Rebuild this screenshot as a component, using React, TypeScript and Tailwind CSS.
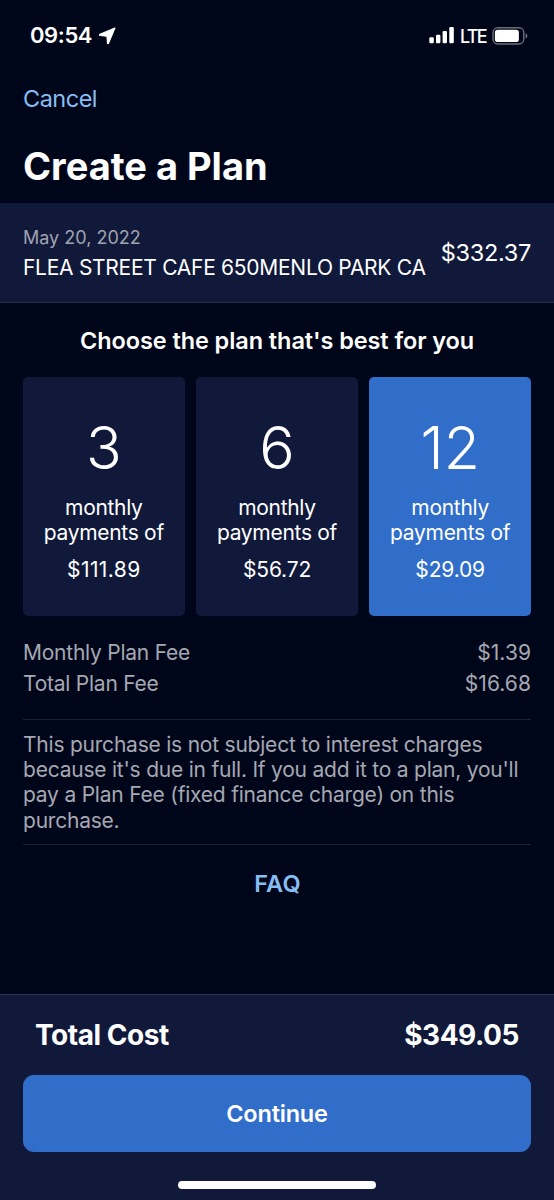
import { useState } from "react";

const plans = [
  { months: 3, amount: "$111.89" },
  { months: 6, amount: "$56.72" },
  { months: 12, amount: "$29.09" },
];

const StatusBar = () => (
  <div className="flex items-center justify-between h-[71px] pl-[30px] pr-[26px]">
    <div className="flex items-center gap-[6px]">
      <span className="w-[63px] text-[22px] font-semibold tracking-[-0.4px]">09:54</span>
      <svg
        className="w-[17px] h-[18px]"
        viewBox="0 0 17 18"
        fill="white"
        stroke="white"
        strokeWidth="1.2"
        strokeLinejoin="round"
      >
        <path d="M15.9 1 .9 7.4c-.5.3-.4 1 .2 1.1l6.6.7c.2 0 .3.1.3.3l.5 6.6c.1.6.7.7 1 .2Z" />
      </svg>
    </div>

    <div className="flex items-center">
      <svg className="w-[25px] h-[17px]" viewBox="0 0 25 17" fill="white">
        <rect x=".3" y="10.3" width="4.5" height="6" rx="1.2" />
        <rect x="7" y="7.7" width="4.4" height="8.6" rx="1.2" />
        <rect x="13.6" y="4" width="4.4" height="12.3" rx="1.2" />
        <rect x="20.3" y="0" width="4.5" height="16.3" rx="1.2" />
      </svg>
      <span className="ml-[6px] w-[27px] pt-px text-[18px] font-medium tracking-[-1.8px]">
        LTE
      </span>
      <svg className="ml-[5px] w-[36px] h-[18px]" viewBox="0 0 36 18" fill="none">
        <rect x="1" y=".8" width="30.8" height="16.2" rx="4.8" stroke="#6c6e7b" strokeWidth="1.4" />
        <rect x="2.9" y="2.8" width="24" height="12.2" rx="2.8" fill="white" />
        <path d="M33.6 6.3c2.4.9 2.4 4.3 0 5.2Z" fill="#6c6e7b" />
      </svg>
    </div>
  </div>
);

const FeeRow = ({ label, value }: { label: string; value: string }) => (
  <div className="flex justify-between">
    <span className="tracking-[-0.24px]">{label}</span>
    <span className="tracking-[0.05px]">{value}</span>
  </div>
);

const App = () => {
  const [selected, setSelected] = useState(12);

  return (
    <div className="flex flex-col w-full h-[1200px] bg-[#00061a] text-white font-['Inter',sans-serif] overflow-hidden">
      <StatusBar />

      {/* Header */}
      <header className="flex flex-col items-start h-[132px] px-[23px]">
        <button className="mt-3 h-8 text-[23.5px] leading-8 tracking-[-0.5px] text-[#86bdf4]">
          Cancel
        </button>
        <h1 className="mt-[27px] text-[38px] leading-[48px] font-bold whitespace-nowrap">
          Create a Plan
        </h1>
      </header>

      {/* Transaction */}
      <section className="flex items-center justify-between h-[100px] px-[23px] bg-[#11193a] border-b border-[#252d4b]">
        <div className="pt-[2px] whitespace-nowrap">
          <p className="text-[18px] leading-[26px] text-[#a0a3b1]">May 20, 2022</p>
          <p className="mt-[2px] text-[21px] leading-[30px] tracking-[-0.28px]">
            FLEA STREET CAFE 650MENLO PARK CA
          </p>
        </div>
        <span className="pt-px text-[23.5px] tracking-[-0.3px]">$332.37</span>
      </section>

      <main className="flex-1 px-[23px]">
        <h2 className="mt-[21px] text-center text-[23.5px] leading-[34px] font-semibold tracking-[-0.08px] whitespace-nowrap">
          Choose the plan that's best for you
        </h2>

        {/* Plans */}
        <div className="grid grid-cols-3 gap-[11.5px] mt-[19px]">
          {plans.map((plan) => (
            <button
              key={plan.months}
              onClick={() => setSelected(plan.months)}
              className={`flex flex-col items-center h-[239px] rounded-[5px] ${
                selected === plan.months ? "bg-[#306ec9]" : "bg-[#11193a]"
              }`}
            >
              <span className="mt-[35px] text-[59px] leading-[72px] font-light">
                {plan.months}
              </span>
              <span className="mt-[11px] text-[21px] leading-[25px] tracking-[-0.3px]">
                monthly
                <br />
                payments of
              </span>
              <span
                className={`mt-3 text-[21px] leading-[25px] ${
                  plan.months === 3 ? "tracking-[0.4px]" : "tracking-[-0.15px]"
                }`}
              >
                {plan.amount}
              </span>
            </button>
          ))}
        </div>

        {/* Fees */}
        <div className="mt-[21px] h-[83px] text-[21px] leading-[31px] text-[#a6a8b2] border-b border-[#1e2334]">
          <FeeRow label="Monthly Plan Fee" value="$1.39" />
          <FeeRow label="Total Plan Fee" value="$16.68" />
        </div>

        <p className="pt-[11.5px] h-[125px] text-[21px] leading-[25.4px] tracking-[-0.22px] text-[#a6a8b2] border-b border-[#1e2334] whitespace-nowrap">
          This purchase is not subject to interest charges
          <br />
          because it's due in full. If you add it to a plan, you'll
          <br />
          pay a Plan Fee (fixed finance charge) on this
          <br />
          purchase.
        </p>

        <div className="flex justify-center mt-[23px] pl-px">
          <button className="text-[23.5px] leading-8 font-semibold tracking-[0.2px] text-[#86bdf4]">
            FAQ
          </button>
        </div>
      </main>

      {/* Total */}
      <footer className="flex flex-col h-[206px] px-[23px] bg-[#11193a] border-t border-[#2d3450]">
        <div className="flex justify-between mt-5 px-3 text-[28px] leading-10 font-bold tracking-[-0.45px]">
          <span>Total Cost</span>
          <span>$349.05</span>
        </div>
        <button className="mt-5 h-[76.5px] shrink-0 rounded-[11px] bg-[#306ec9] text-[23.5px] font-semibold tracking-[-0.2px]">
          Continue
        </button>
        <div className="mt-[29.5px] mx-auto w-[198px] h-2 shrink-0 rounded-full bg-white" />
      </footer>
    </div>
  );
};

export default App;
